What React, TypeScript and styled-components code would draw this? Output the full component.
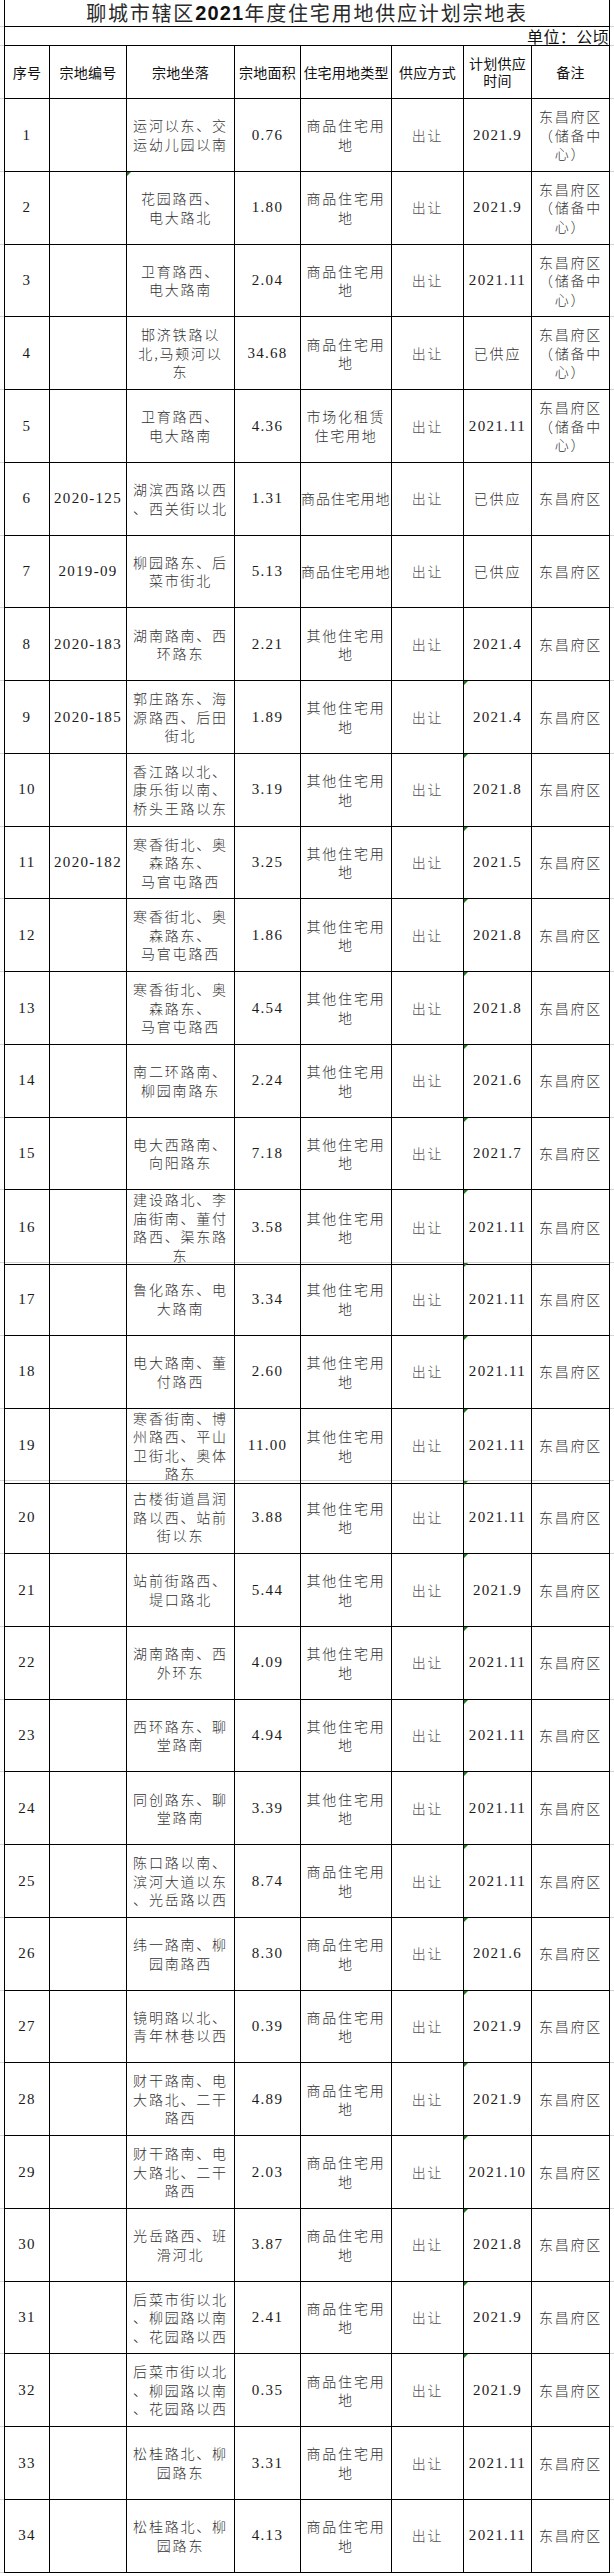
import styled, { createGlobalStyle } from 'styled-components';

type Align = 'center' | 'start';

interface Plot {
  no: number;
  code: string;
  place: string;
  area: string;
  kind: string;
  method: string;
  time: string;
  note: string;
  kindNoWrap?: boolean;
  placeFlag?: boolean;
  timeFlag?: boolean;
}

const RESERVE = '东昌府区\n（储备中\n心）';
const DISTRICT = '东昌府区';
const COMMERCIAL = '商品住宅用\n地';
const OTHER = '其他住宅用\n地';
const ROW_HEIGHT = 2474 / 34;

const plots: Plot[] = [
  { no: 1, code: '', place: '运河以东、交\n运幼儿园以南', area: '0.76', kind: COMMERCIAL, method: '出让', time: '2021.9', note: RESERVE },
  { no: 2, code: '', place: '花园路西、\n电大路北', area: '1.80', kind: COMMERCIAL, method: '出让', time: '2021.9', note: RESERVE, placeFlag: true },
  { no: 3, code: '', place: '卫育路西、\n电大路南', area: '2.04', kind: COMMERCIAL, method: '出让', time: '2021.11', note: RESERVE },
  { no: 4, code: '', place: '邯济铁路以\n北,马颊河以\n东', area: '34.68', kind: COMMERCIAL, method: '出让', time: '已供应', note: RESERVE },
  { no: 5, code: '', place: '卫育路西、\n电大路南', area: '4.36', kind: '市场化租赁\n住宅用地', method: '出让', time: '2021.11', note: RESERVE },
  { no: 6, code: '2020-125', place: '湖滨西路以西\n、西关街以北', area: '1.31', kind: '商品住宅用地', kindNoWrap: true, method: '出让', time: '已供应', note: DISTRICT },
  { no: 7, code: '2019-09', place: '柳园路东、后\n菜市街北', area: '5.13', kind: '商品住宅用地', kindNoWrap: true, method: '出让', time: '已供应', note: DISTRICT },
  { no: 8, code: '2020-183', place: '湖南路南、西\n环路东', area: '2.21', kind: OTHER, method: '出让', time: '2021.4', note: DISTRICT },
  { no: 9, code: '2020-185', place: '郭庄路东、海\n源路西、后田\n街北', area: '1.89', kind: OTHER, method: '出让', time: '2021.4', note: DISTRICT, timeFlag: true },
  { no: 10, code: '', place: '香江路以北、\n康乐街以南、\n桥头王路以东', area: '3.19', kind: OTHER, method: '出让', time: '2021.8', note: DISTRICT, timeFlag: true },
  { no: 11, code: '2020-182', place: '寒香街北、奥\n森路东、\n马官屯路西', area: '3.25', kind: OTHER, method: '出让', time: '2021.5', note: DISTRICT, timeFlag: true },
  { no: 12, code: '', place: '寒香街北、奥\n森路东、\n马官屯路西', area: '1.86', kind: OTHER, method: '出让', time: '2021.8', note: DISTRICT, timeFlag: true },
  { no: 13, code: '', place: '寒香街北、奥\n森路东、\n马官屯路西', area: '4.54', kind: OTHER, method: '出让', time: '2021.8', note: DISTRICT, timeFlag: true },
  { no: 14, code: '', place: '南二环路南、\n柳园南路东', area: '2.24', kind: OTHER, method: '出让', time: '2021.6', note: DISTRICT, timeFlag: true },
  { no: 15, code: '', place: '电大西路南、\n向阳路东', area: '7.18', kind: OTHER, method: '出让', time: '2021.7', note: DISTRICT, timeFlag: true },
  { no: 16, code: '', place: '建设路北、李\n庙街南、董付\n路西、渠东路\n东', area: '3.58', kind: OTHER, method: '出让', time: '2021.11', note: DISTRICT, timeFlag: true },
  { no: 17, code: '', place: '鲁化路东、电\n大路南', area: '3.34', kind: OTHER, method: '出让', time: '2021.11', note: DISTRICT, timeFlag: true },
  { no: 18, code: '', place: '电大路南、董\n付路西', area: '2.60', kind: OTHER, method: '出让', time: '2021.11', note: DISTRICT, timeFlag: true },
  { no: 19, code: '', place: '寒香街南、博\n州路西、平山\n卫街北、奥体\n路东', area: '11.00', kind: OTHER, method: '出让', time: '2021.11', note: DISTRICT, timeFlag: true },
  { no: 20, code: '', place: '古楼街道昌润\n路以西、站前\n街以东', area: '3.88', kind: OTHER, method: '出让', time: '2021.11', note: DISTRICT, timeFlag: true },
  { no: 21, code: '', place: '站前街路西、\n堤口路北', area: '5.44', kind: OTHER, method: '出让', time: '2021.9', note: DISTRICT, timeFlag: true },
  { no: 22, code: '', place: '湖南路南、西\n外环东', area: '4.09', kind: OTHER, method: '出让', time: '2021.11', note: DISTRICT, timeFlag: true },
  { no: 23, code: '', place: '西环路东、聊\n堂路南', area: '4.94', kind: OTHER, method: '出让', time: '2021.11', note: DISTRICT, timeFlag: true },
  { no: 24, code: '', place: '同创路东、聊\n堂路南', area: '3.39', kind: OTHER, method: '出让', time: '2021.11', note: DISTRICT, timeFlag: true },
  { no: 25, code: '', place: '陈口路以南、\n滨河大道以东\n、光岳路以西', area: '8.74', kind: COMMERCIAL, method: '出让', time: '2021.11', note: DISTRICT, timeFlag: true },
  { no: 26, code: '', place: '纬一路南、柳\n园南路西', area: '8.30', kind: COMMERCIAL, method: '出让', time: '2021.6', note: DISTRICT, timeFlag: true },
  { no: 27, code: '', place: '镜明路以北、\n青年林巷以西', area: '0.39', kind: COMMERCIAL, method: '出让', time: '2021.9', note: DISTRICT, timeFlag: true },
  { no: 28, code: '', place: '财干路南、电\n大路北、二干\n路西', area: '4.89', kind: COMMERCIAL, method: '出让', time: '2021.9', note: DISTRICT, timeFlag: true },
  { no: 29, code: '', place: '财干路南、电\n大路北、二干\n路西', area: '2.03', kind: COMMERCIAL, method: '出让', time: '2021.10', note: DISTRICT, timeFlag: true },
  { no: 30, code: '', place: '光岳路西、班\n滑河北', area: '3.87', kind: COMMERCIAL, method: '出让', time: '2021.8', note: DISTRICT, timeFlag: true },
  { no: 31, code: '', place: '后菜市街以北\n、柳园路以南\n、花园路以西', area: '2.41', kind: COMMERCIAL, method: '出让', time: '2021.9', note: DISTRICT, timeFlag: true },
  { no: 32, code: '', place: '后菜市街以北\n、柳园路以南\n、花园路以西', area: '0.35', kind: COMMERCIAL, method: '出让', time: '2021.9', note: DISTRICT, timeFlag: true },
  { no: 33, code: '', place: '松桂路北、柳\n园路东', area: '3.31', kind: COMMERCIAL, method: '出让', time: '2021.11', note: DISTRICT },
  { no: 34, code: '', place: '松桂路北、柳\n园路东', area: '4.13', kind: COMMERCIAL, method: '出让', time: '2021.11', note: DISTRICT },
];

const headers = ['序号', '宗地编号', '宗地坐落', '宗地面积', '住宅用地类型', '供应方式', '计划供应\n时间', '备注'];

const isDigits = (text: string) => /^[0-9.\-]+$/.test(text);

const App = () => {
  return (
    <>
      <GlobalStyle />
      <Sheet>
        <Row $height={27}>
          <TitleCell>
            聊城市辖区<TitleYear>2021</TitleYear>年度住宅用地供应计划宗地表
          </TitleCell>
        </Row>
        <Row $height={19}>
          <UnitCell>单位：公顷</UnitCell>
        </Row>
        <Row $height={53}>
          {headers.map((label, i) => (
            <HeadCell key={label} $first={i === 0}>
              {label}
            </HeadCell>
          ))}
        </Row>
        {plots.map((plot) => {
          const cells: { text: string; align?: Align; flag?: boolean; muted?: boolean }[] = [
            { text: String(plot.no) },
            { text: plot.code },
            { text: plot.place, flag: plot.placeFlag },
            { text: plot.area },
            { text: plot.kind, align: plot.kindNoWrap ? 'start' : 'center' },
            { text: plot.method, muted: true },
            { text: plot.time, flag: plot.timeFlag },
            { text: plot.note },
          ];
          return (
            <Row key={plot.no} $height={ROW_HEIGHT}>
              {cells.map((cell, i) => (
                <BodyCell
                  key={i}
                  $first={i === 0}
                  $align={cell.align ?? 'center'}
                  $flag={!!cell.flag}
                  $serif={isDigits(cell.text)}
                  $muted={!!cell.muted}
                >
                  {cell.text}
                </BodyCell>
              ))}
            </Row>
          );
        })}
      </Sheet>
    </>
  );
};

export default App;

const GlobalStyle = createGlobalStyle`
  html,
  body {
    margin: 0;
    padding: 0;
    background: #ffffff;
  }

  body {
    font-family: 'Noto Sans CJK SC', 'Noto Sans', sans-serif;
  }
`;

const Sheet = styled.div`
  display: flex;
  flex-direction: column;
  width: 614px;
`;

const Row = styled.div<{ $height: number }>`
  display: grid;
  grid-template-columns: 46px 77px 108px 66px 91px 72px 68px 78px;
  box-sizing: border-box;
  height: ${({ $height }) => $height}px;
  padding: 0 4px;

  background: linear-gradient(#d4d4d4, #d4d4d4) left bottom / 100% 1px no-repeat;
`;

const TitleCell = styled.div`
  grid-column: 1 / -1;
  display: flex;
  align-items: flex-end;
  justify-content: center;
  box-sizing: border-box;

  border-left: 1px solid #000;
  border-right: 1px solid #000;
  border-bottom: 1px solid #000;

  padding-bottom: 1px;
  font-family: 'Noto Sans CJK SC', sans-serif;
  font-size: 20px;
  line-height: 24px;
  letter-spacing: 1.8px;
  color: #2a2a2a;
  white-space: nowrap;
`;

const TitleYear = styled.span`
  font-family: 'Liberation Sans', Arial, sans-serif;
  font-weight: 700;
  font-size: 20px;
  letter-spacing: 1.2px;
  color: #111;
`;

const UnitCell = styled.div`
  grid-column: 1 / -1;
  display: flex;
  align-items: flex-end;
  justify-content: flex-end;
  box-sizing: border-box;

  border-left: 1px solid #000;
  border-right: 1px solid #000;
  border-bottom: 1px solid #000;

  font-family: 'Noto Sans CJK SC', sans-serif;
  font-size: 16px;
  line-height: 18px;
  letter-spacing: 0.4px;
  color: #111;
  white-space: nowrap;
`;

const HeadCell = styled.div<{ $first: boolean }>`
  display: flex;
  align-items: center;
  justify-content: center;
  box-sizing: border-box;

  border-left: ${({ $first }) => ($first ? '1px solid #000' : 'none')};
  border-right: 1px solid #000;
  border-bottom: 1px solid #000;

  font-family: 'Noto Sans CJK SC', sans-serif;
  font-size: 14px;
  line-height: 17px;
  letter-spacing: 0.2px;
  color: #111;
  text-align: center;
  white-space: pre-line;
`;

const BodyCell = styled.div<{
  $first: boolean;
  $align: Align;
  $flag: boolean;
  $serif: boolean;
  $muted: boolean;
}>`
  position: relative;
  display: flex;
  align-items: center;
  justify-content: ${({ $align }) => ($align === 'start' ? 'flex-start' : 'center')};
  box-sizing: border-box;
  min-width: 0;

  border-left: ${({ $first }) => ($first ? '1px solid #000' : 'none')};
  border-right: 1px solid #000;
  border-bottom: 1px solid #000;

  white-space: ${({ $align }) => ($align === 'start' ? 'nowrap' : 'pre-line')};
  text-align: center;

  font-family: ${({ $serif }) =>
    $serif ? "'Liberation Serif', 'Times New Roman', serif" : "'Noto Sans CJK SC', sans-serif"};
  font-size: ${({ $serif }) => ($serif ? '15px' : '14px')};
  font-weight: ${({ $serif }) => ($serif ? 400 : 300)};
  letter-spacing: ${({ $serif, $align }) => ($serif ? '1.3px' : $align === 'start' ? '0.9px' : '1.8px')};
  line-height: 18.5px;
  color: ${({ $muted, $serif }) => ($muted ? '#555' : $serif ? '#1a1a1a' : '#333')};

  &::before {
    content: '';
    display: ${({ $flag }) => ($flag ? 'block' : 'none')};
    position: absolute;
    top: 0;
    left: 0;
    border-top: 4px solid #1f7a1f;
    border-right: 4px solid transparent;
  }
`;
